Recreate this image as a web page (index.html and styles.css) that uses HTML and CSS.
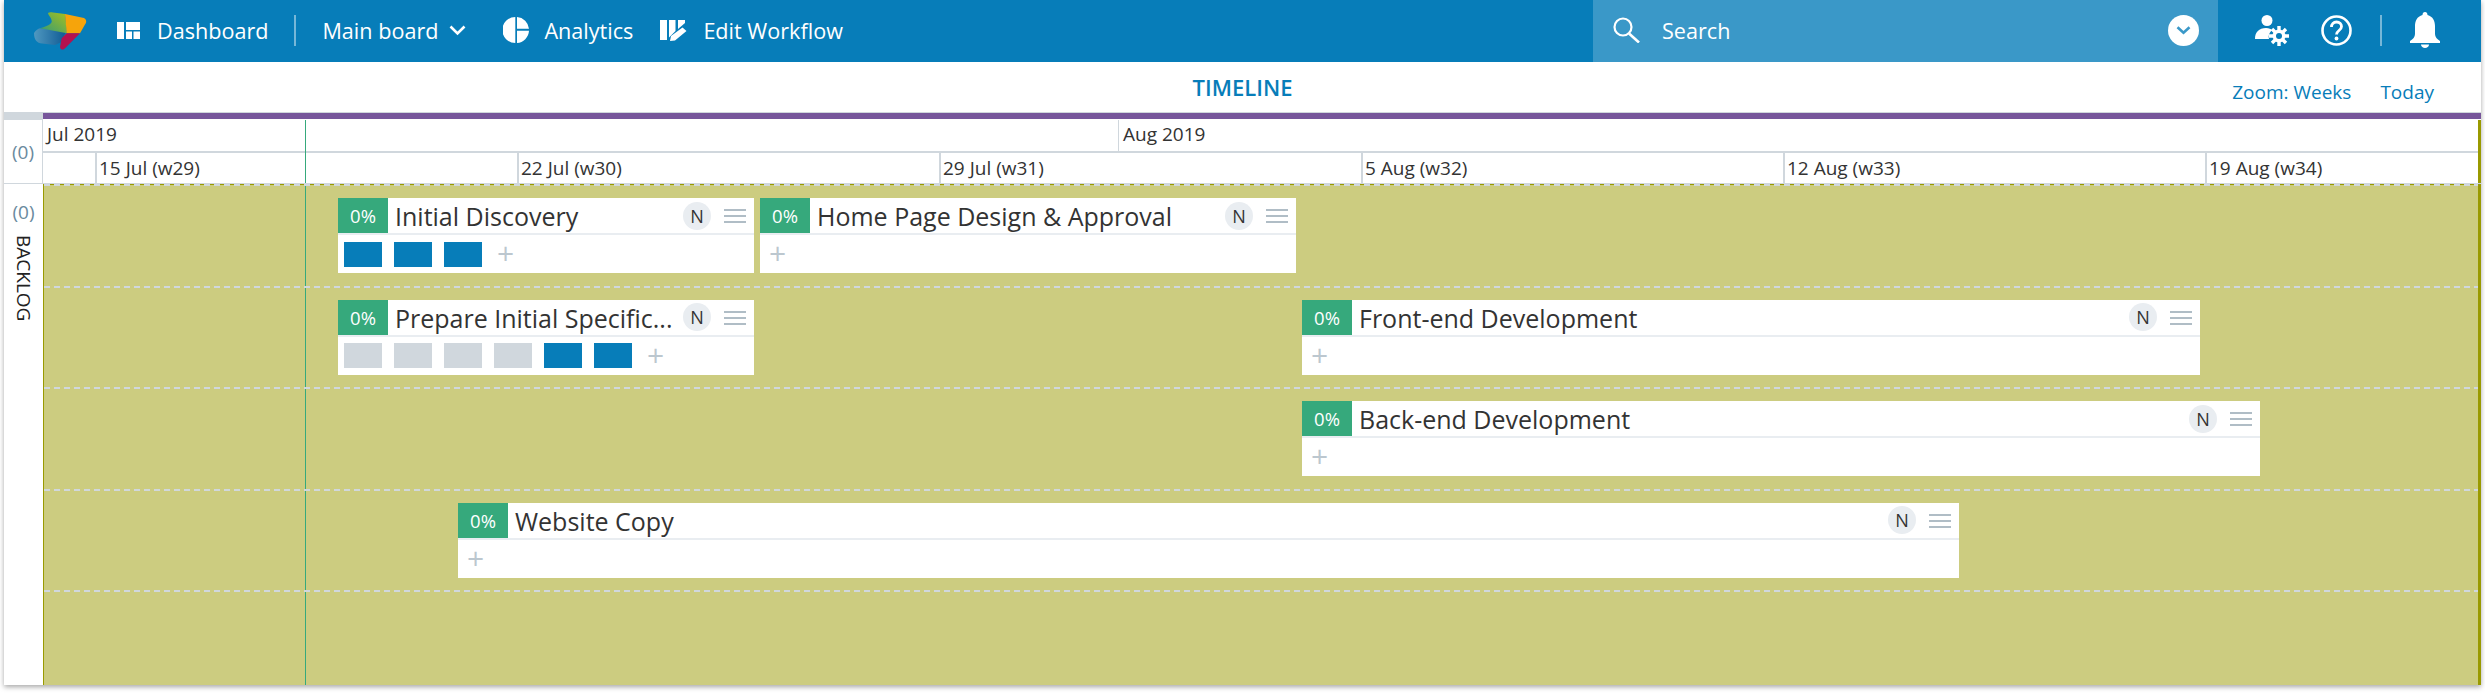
FILE: index.html
```html
<!DOCTYPE html>
<html lang="en">
<head>
    <meta charset="UTF-8">
    <title>Timeline</title>
    <link rel="stylesheet" href="styles.css">
</head>
<body>
<div class="page">
    <header class="topbar">
        <svg class="logo" viewBox="0 0 53 38" width="53" height="38">
            <defs>
                <linearGradient id="lgBlue" x1="0" y1="0" x2="1" y2="0"><stop offset="0" stop-color="#4f98c0"/><stop offset="1" stop-color="#0f5a94"/></linearGradient>
                <linearGradient id="lgGreen" x1="0" y1="1" x2="1" y2="0"><stop offset="0" stop-color="#2f9a7a"/><stop offset="1" stop-color="#a8c01c"/></linearGradient>
            </defs>
            <path d="M0 21C2 18 4 17 6 16.300L32 19 27.700 30 21 33 8 31.500C3 31 0 28 0 21Z" fill="url(#lgBlue)"/>
            <path d="M14 1C15 0 17 0 19 .5L31 2 33 21.300 6 16.300C10 15 17 13 17.700 9.700 18 6 14 3 14 1Z" fill="url(#lgGreen)"/>
            <path d="M31 2L50 6C52 7 52.500 9 52 10.700L46 21.300 32.700 21.300Z" fill="#f6a40b"/>
            <path d="M32.700 21.300H46L31 36.300C29.500 38.300 26.500 38 26 35L27.700 26.300Z" fill="#b5124f"/>
        </svg>
        <nav class="nav">
            <a class="nav-item item-dash" href="#">
                <svg width="23" height="17" viewBox="0 0 23 17"><path fill="#fff" d="M0 0h7v17H0zM9 0h14v8H9zM9 9.500h6V17H9zM16.500 9.500H23V17h-6.500z"/></svg>
                <span>Dashboard</span>
            </a>
            <i class="nav-sep"></i>
            <a class="nav-item item-board" href="#">
                <span>Main board</span>
                <svg width="17" height="11" viewBox="0 0 17 11"><path fill="none" stroke="#fff" stroke-width="2.600" d="M1.500 1.500l7 7 7-7"/></svg>
            </a>
            <a class="nav-item item-analytics" href="#">
                <svg width="26" height="26" viewBox="0 0 26 26"><path fill="#fff" d="M12.300 0A13 13 0 0 0 12.300 26zM14 0A13 13 0 0 1 26 11.800H14zM14 13.800H26A13 13 0 0 1 14 26z"/></svg>
                <span>Analytics</span>
            </a>
            <a class="nav-item item-edit" href="#">
                <svg width="27" height="21" viewBox="0 0 27 21"><path fill="#fff" d="M0 0h7v20H0zM9 0h6.500v11L9 17.500zM18 0h7v3l-7 6zM22.500 7.500l4 3.500L15 20.500l-5 .5 1-5z"/></svg>
                <span>Edit Workflow</span>
            </a>
        </nav>
        <div class="search">
            <svg width="29" height="26" viewBox="0 0 29 26"><circle cx="11" cy="10" r="8.500" fill="none" stroke="#fff" stroke-width="2.200"/><path d="M17 16.500l10 9" stroke="#fff" stroke-width="2.600"/></svg>
            <span class="search-label">Search</span>
            <span class="search-drop"><svg width="15" height="9" viewBox="0 0 15 9"><path fill="none" stroke="#3a98c8" stroke-width="2.600" d="M1.500 1.200l6 5.500 6-5.500"/></svg></span>
        </div>
        <div class="tools">
            <svg class="tool-user" width="34" height="31" viewBox="0 0 34 31">
                <circle cx="12" cy="5.500" r="5.500" fill="#fff"/>
                <path fill="#fff" d="M0 24c0-7 4-11 11-11 3 0 5 1 6 2-3 3-4 6-3 9z"/>
                <path stroke="#fff" stroke-width="3.400" d="M24 11v20M14 21h20M17 14l14 14M31 14L17 28"/>
                <circle cx="24" cy="21" r="6.500" fill="#fff"/>
                <circle cx="24" cy="21" r="3" fill="#077db9"/>
            </svg>
            <svg class="tool-help" width="31" height="31" viewBox="0 0 31 31">
                <circle cx="15.500" cy="15.500" r="14" fill="none" stroke="#fff" stroke-width="2.600"/>
                <path fill="none" stroke="#fff" stroke-width="2.800" d="M10.500 12c0-3 2-5 5-5s5 2 5 4.500c0 4-5 4-5 8"/>
                <circle cx="15.500" cy="23.500" r="1.900" fill="#fff"/>
            </svg>
            <i class="nav-sep tool-sep"></i>
            <svg class="tool-bell" width="30" height="36" viewBox="0 0 30 36">
                <path fill="#fff" d="M15 0c1.500 0 2.500 1 2.500 3C23 4.500 25 9 25 14v8c0 3 2 5 5 7v2H0v-2c3-2 5-4 5-7v-8C5 9 7 4.500 12.500 3c0-2 1-3 2.500-3z"/>
                <path fill="#fff" d="M11 32.500h8c0 2-2 3.500-4 3.500s-4-1.500-4-3.500z"/>
            </svg>
        </div>
    </header>

    <div class="titlebar">
        <h1 class="title">TIMELINE</h1>
        <div class="title-links">
            <a href="#">Zoom: Weeks</a>
            <a href="#">Today</a>
        </div>
    </div>

    <div class="purple-row">
        <div class="purple-stub"></div>
        <div class="purple-bar"></div>
    </div>

    <div class="scale">
        <div class="count-cell"><span class="count">(0)</span></div>
        <div class="scale-body">
            <div class="today-line scale-today"></div>
            <div class="months">
                <div class="month month-jul">Jul 2019</div>
                <div class="month">Aug 2019</div>
            </div>
            <div class="weeks">
                <div class="week week-first"></div>
                <div class="week">15 Jul (w29)</div>
                <div class="week">22 Jul (w30)</div>
                <div class="week">29 Jul (w31)</div>
                <div class="week">5 Aug (w32)</div>
                <div class="week">12 Aug (w33)</div>
                <div class="week week-last">19 Aug (w34)</div>
            </div>
        </div>
    </div>

    <div class="board">
        <aside class="lane-head">
            <span class="count">(0)</span>
            <span class="lane-name">BACKLOG</span>
        </aside>
        <div class="lane">
            <div class="today-line"></div>
            <div class="row">
                <div class="card" style="left:294px;width:416px">
                    <div class="card-head">
                        <span class="pct">0%</span>
                        <span class="card-title">Initial Discovery</span>
                        <span class="badge">N</span>
                        <span class="menu"></span>
                    </div>
                    <div class="card-tasks">
                        <i class="task done"></i><i class="task done"></i><i class="task done"></i>
                        <span class="add">+</span>
                    </div>
                </div>
                <div class="card" style="left:716px;width:536px">
                    <div class="card-head">
                        <span class="pct">0%</span>
                        <span class="card-title">Home Page Design &amp; Approval</span>
                        <span class="badge">N</span>
                        <span class="menu"></span>
                    </div>
                    <div class="card-tasks"><span class="add">+</span></div>
                </div>
            </div>
            <div class="row">
                <div class="card" style="left:294px;width:416px">
                    <div class="card-head">
                        <span class="pct">0%</span>
                        <span class="card-title">Prepare Initial Specific...</span>
                        <span class="badge">N</span>
                        <span class="menu"></span>
                    </div>
                    <div class="card-tasks">
                        <i class="task"></i><i class="task"></i><i class="task"></i><i class="task"></i>
                        <i class="task done"></i><i class="task done"></i>
                        <span class="add">+</span>
                    </div>
                </div>
                <div class="card" style="left:1258px;width:898px">
                    <div class="card-head">
                        <span class="pct">0%</span>
                        <span class="card-title">Front-end Development</span>
                        <span class="badge">N</span>
                        <span class="menu"></span>
                    </div>
                    <div class="card-tasks"><span class="add">+</span></div>
                </div>
            </div>
            <div class="row">
                <div class="card" style="left:1258px;width:958px">
                    <div class="card-head">
                        <span class="pct">0%</span>
                        <span class="card-title">Back-end Development</span>
                        <span class="badge">N</span>
                        <span class="menu"></span>
                    </div>
                    <div class="card-tasks"><span class="add">+</span></div>
                </div>
            </div>
            <div class="row">
                <div class="card" style="left:414px;width:1501px">
                    <div class="card-head">
                        <span class="pct">0%</span>
                        <span class="card-title">Website Copy</span>
                        <span class="badge">N</span>
                        <span class="menu"></span>
                    </div>
                    <div class="card-tasks"><span class="add">+</span></div>
                </div>
            </div>
        </div>
    </div>
</div>
</body>
</html>
```

FILE: styles.css
```css
*{margin:0;padding:0;box-sizing:border-box;}
html,body{height:100%;background:#fff;overflow:hidden;}
body{font-family:"Open Sans","Liberation Sans",sans-serif;color:#333;}
a{text-decoration:none;color:inherit;}
i{display:block;font-style:normal;}

.page{width:2477px;height:685px;margin-left:4px;background:#fff;box-shadow:0 2px 5px rgba(0,0,0,0.35);display:flex;flex-direction:column;}

/* top bar */
.topbar{height:62px;background:#077db9;color:#fff;display:flex;align-items:center;font-size:21.6px;flex:none;}
.logo{margin-left:30px;flex:none;}
.nav{display:flex;align-items:center;margin:0 0 2px 30px;flex:1;}
.nav-item{display:flex;align-items:center;}
.nav-sep{width:2px;height:31px;background:rgba(255,255,255,0.45);}
.item-dash svg{margin-right:17px;}
.item-dash{margin-right:26px;}
.item-board{margin-left:26px;}
.item-board svg{margin-left:11px;}
.item-analytics{margin-left:37px;}
.item-analytics svg{margin-right:15px;}
.item-edit{margin-left:27px;}
.item-edit svg{margin-right:16px;}
.search{width:625px;height:62px;background:#3a98c8;display:flex;align-items:center;padding:0 19px 2px;flex:none;}
.search-label{margin-left:21px;flex:1;}
.search-drop{width:31px;height:31px;border-radius:50%;background:#fff;display:flex;align-items:center;justify-content:center;}
.tools{width:263px;display:flex;align-items:center;padding:0 0 2px 37px;flex:none;}
.tool-help{margin-left:32px;}
.tool-sep{margin-left:28px;}
.tool-bell{margin-left:28px;}

/* title row */
.titlebar{height:50px;position:relative;display:flex;align-items:center;justify-content:center;flex:none;}
.title{font-size:22px;font-weight:600;color:#077db9;}
.title-links{position:absolute;right:47px;top:17px;display:flex;gap:29px;font-size:19px;color:#077db9;}

.purple-row{height:8px;display:flex;border-top:1px solid #d0d7dd;flex:none;}
.purple-stub{width:39px;background:#d0d7dd;}
.purple-bar{flex:1;background:#77569b;border-bottom:1px solid #fff;}

/* date scale */
.scale{height:64px;display:flex;border-bottom:1px solid #d0d7dd;flex:none;}
.count-cell{width:39px;display:flex;align-items:center;justify-content:center;border-right:1px solid #d0d7dd;flex:none;}
.count{font-size:19px;color:#6a8a9e;}
.scale-body{flex:1;min-width:0;display:flex;flex-direction:column;position:relative;border-right:3px solid #999a00;}
.months{height:33px;display:flex;border-bottom:2px solid #d0d7dd;}
.month{font-size:19px;padding-left:4px;line-height:29px;flex:1;}
.month-jul{width:1076px;flex:none;border-right:1px solid #d0d7dd;}
.weeks{flex:1;display:flex;}
.week{width:422px;font-size:19px;line-height:30px;padding-left:2px;border-left:2px solid #d0d7dd;flex:none;}
.week-first{width:52px;border-left:0;}
.week-last{width:auto;flex:1;min-width:0;}

/* lane */
.board{flex:1;display:flex;min-height:0;}
.lane-head{width:39px;display:flex;flex-direction:column;align-items:center;padding-top:15px;flex:none;}
.lane-name{writing-mode:vertical-rl;font-size:19px;color:#222;margin-top:10px;line-height:22px;}
.lane{flex:1;position:relative;background:#cccc80;border-left:1px solid #999a00;border-right:3px solid #999a00;border-top:1px solid #999a00;}
.today-line{position:absolute;left:261px;top:0;bottom:0;width:1px;background:#36a97c;}
.scale-today{left:262px;}
.row{height:101.5px;position:relative;}
.row::before{content:"";position:absolute;left:0;right:0;top:-1px;height:2px;background:repeating-linear-gradient(90deg,#d0d7dd 0,#d0d7dd 6px,transparent 6px,transparent 10px);}
.row:first-of-type::before{top:0;}
.row:last-child::after{content:"";position:absolute;left:0;right:0;bottom:-1px;height:2px;background:repeating-linear-gradient(90deg,#d0d7dd 0,#d0d7dd 6px,transparent 6px,transparent 10px);}

/* cards */
.card{position:absolute;top:13px;height:75px;background:#fff;z-index:1;}
.card-head{height:37px;display:flex;align-items:center;border-bottom:2px solid #e9edf1;padding-right:8px;}
.pct{width:50px;height:35px;align-self:flex-start;background:#36a97c;color:#fff;font-size:18.5px;text-align:center;line-height:35px;flex:none;}
.card-title{flex:1;min-width:0;font-size:25px;line-height:35px;margin-top:2px;padding-left:7px;color:#333;white-space:nowrap;}
.badge{width:28px;height:28px;border-radius:50%;background:#e9edf1;font-size:18px;line-height:28px;text-align:center;flex:none;}
.menu{width:22px;height:14px;margin-left:13px;margin-top:1px;border-top:2px solid #b0bdc6;border-bottom:2px solid #b0bdc6;position:relative;flex:none;}
.menu::after{content:"";position:absolute;left:0;right:0;top:4px;height:2px;background:#b0bdc6;}
.card-tasks{height:38px;display:flex;align-items:center;padding-left:6px;gap:12px;}
.task{width:38px;height:25px;background:#d0d7dd;}
.task.done{background:#077db9;}
.add{font-size:30px;font-weight:400;line-height:25px;color:#bcc7cf;margin-left:3px;margin-bottom:3px;}
```
